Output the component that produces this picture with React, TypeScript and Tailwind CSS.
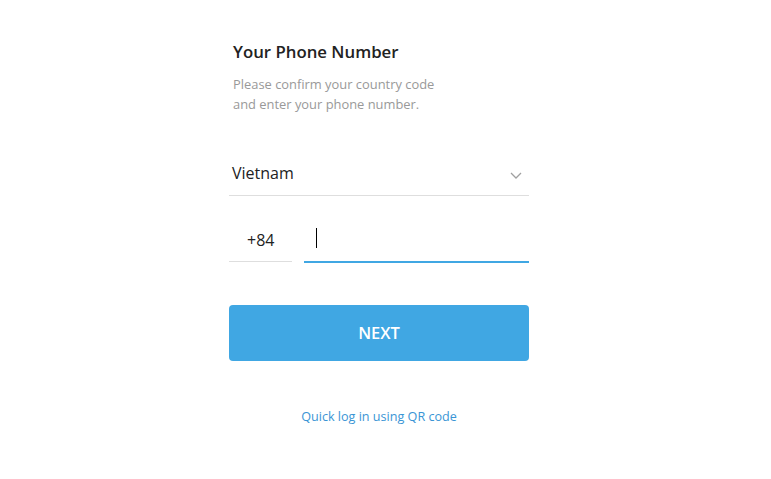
import React from "react";

export default function App() {
  return (
    <div className="w-[771px] h-[479px] bg-white flex justify-center" style={{ fontFamily: '"Open Sans", sans-serif' }}>
      <div className="w-[300px] mr-[13px] flex flex-col">
        <div className="pt-[40px] pl-[4px] text-[16.8px] font-semibold text-[#222] leading-[24px]">Your Phone Number</div>
        <div className="pt-[10px] pl-[4px] text-[12.9px] text-[#999] leading-[20px]">
          Please confirm your country code
          <br />
          and enter your phone number.
        </div>
        <div className="mt-[38px] h-[44px] border-b border-[#dedede] flex items-center justify-between pl-[3px] pr-[7px]">
          <span className="text-[16px] text-[#222] mt-[-2px]">Vietnam</span>
          <svg width="12" height="12" viewBox="0 0 12 12" className="mt-[2px]">
            <path d="M1 4l5 5 5-5" fill="none" stroke="#a0a0a0" strokeWidth="1.3" />
          </svg>
        </div>
        <div className="mt-[23px] flex gap-[12px] items-end">
          <div className="w-[63px] h-[43px] border-b border-[#dedede] flex items-center pl-[18px] text-[16px] text-[#222]">+84</div>
          <div className="flex-1 h-[43px] border-b-2 border-[#40a7e3] flex items-center pl-[12px] mb-[-1px]">
            <div className="w-[1px] h-[20px] bg-black mt-[-6px]"></div>
          </div>
        </div>
        <button className="mt-[43px] h-[56px] w-full rounded-[4px] bg-[#40a7e3] text-white text-[16.5px] font-semibold">NEXT</button>
        <div className="mt-[47px] text-center text-[12.6px] text-[#3a95d5]">Quick log in using QR code</div>
      </div>
    </div>
  );
}
